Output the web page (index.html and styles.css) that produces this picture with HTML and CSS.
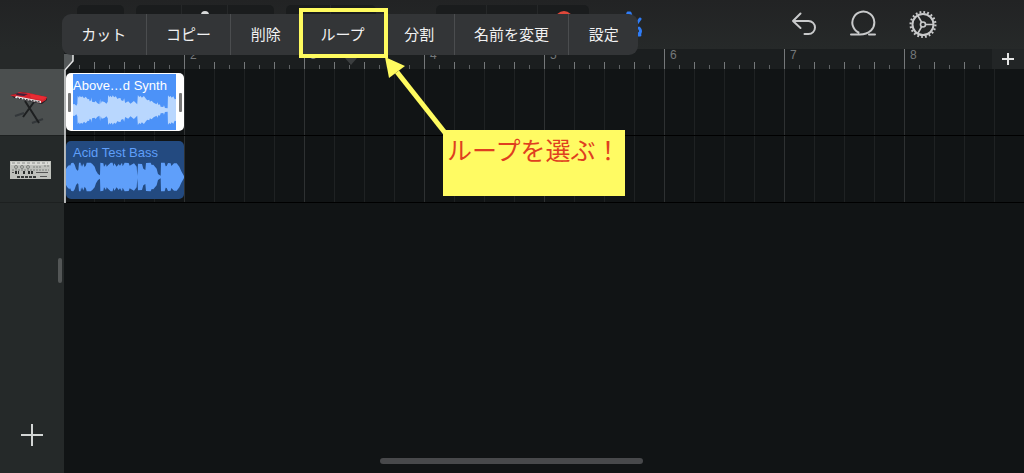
FILE: index.html
```html
<!DOCTYPE html>
<html lang="ja">
<head>
<meta charset="utf-8">
<title>トラック</title>
<meta name="viewport" content="width=device-width, initial-scale=1">
<link rel="stylesheet" href="styles.css">
</head>
<body>
<div class="app">
  <header class="toolbar">
    <div class="group"><button class="tool" aria-label="ブラウザ"></button></div>
    <div class="group">
      <button class="tool" aria-label="表示"></button>
      <button class="tool" aria-label="音源"><span class="dot dot-white"></span></button>
      <button class="tool" aria-label="トラック"></button>
    </div>
    <div class="group group-mid"><button class="tool" aria-label="エフェクト"></button><button class="tool" aria-label="コントロール"></button></div>
    <div class="group group-transport">
      <button class="tool" aria-label="先頭へ"></button>
      <button class="tool" aria-label="再生"></button>
      <button class="tool" aria-label="録音"><span class="dot dot-red"></span></button>
    </div>
    <button class="icon metronome" aria-label="メトロノーム">
      <svg width="24" height="30" viewBox="0 0 24 30" fill="none" stroke="#2f7cf6" stroke-width="3" stroke-linecap="round" stroke-linejoin="round"><path d="M7 4h2l7 20c0 2 2 2 3 0 1-2 0-4-1-5M7 4 1 26h18M12 20 19 10"/></svg>
    </button>
    <nav class="actions">
      <button class="icon" aria-label="取り消す">
        <svg width="26" height="28" viewBox="0 0 26 28" fill="none" stroke="#c9cacb" stroke-width="2" stroke-linecap="round" stroke-linejoin="round"><path d="M9.500 3.500 2 11l7.500 7M2 11h15.500a6.500 6.500 0 0 1 6.500 6.500 6.500 6.500 0 0 1-6.500 6.500h-4"/></svg>
      </button>
      <button class="icon" aria-label="ループブラウザ">
        <svg width="28" height="28" viewBox="0 0 28 28" fill="none" stroke="#c9cacb" stroke-width="2" stroke-linecap="round"><path d="M2 24.500H11Q17.500 24.500 22 20.500A11 11 0 1 0 9.500 22.500M20 24.500H26"/></svg>
      </button>
      <button class="icon" aria-label="設定">
        <svg width="28" height="28" viewBox="0 0 28 28" fill="none" stroke="#c9cacb"><circle cx="14" cy="14.500" r="10.500" stroke-width="2"/><circle cx="14" cy="14.500" r="12.400" stroke-width="2.200" stroke-dasharray="1.800 2.095"/><circle cx="14" cy="14.500" r="2.500" stroke-width="1.600"/><path stroke-width="1.700" d="M16.500 14.500H25M12.700 12.300 8.700 5.300M12.700 16.700l-4 7"/></svg>
      </button>
    </nav>
  </header>

  <div class="corner"></div>
  <div class="rulerbar">
    <ol class="ruler">
      <li></li><li>2</li><li>3</li><li>4</li><li>5</li><li>6</li><li>7</li><li>8</li>
    </ol>
    <button class="section-add" aria-label="セクションを追加">
      <svg width="12" height="12" viewBox="0 0 12 12" stroke="#e4e5e5" stroke-width="2"><path d="M6 0v12M0 6h12"/></svg>
    </button>
    <svg class="endmark" width="12" height="7" viewBox="0 0 12 7"><path d="M0 0h12L6 7z" fill="#3b3e3f"/></svg>
  </div>

  <aside class="sidebar">
    <button class="track-head selected" aria-label="Above and Beyond Synth">
      <svg width="46" height="46" viewBox="0 0 46 46"><path d="M7 36l9-3M24 43l11-4" stroke="#33373a" stroke-width="2"/><path d="M17 21 31 43M26 22 15 37" fill="none" stroke="#1d1f20" stroke-width="2"/><path d="M3 15l11-3 25 5v3l-5 4L6 18z" fill="#242026"/><path d="M2 15l6-1 3-2 10 1 18 4-1 3-5 3L4 16z" fill="#d3252f"/><path d="M9 13l11 1-4 2-8-1z" fill="#42203a"/><path d="M8 16l25 5v2L7 18z" fill="#eceaea"/><path d="M9 18l23 4" stroke="#27282b" stroke-dasharray="2 1"/><path d="M22 14l17 3-4 3-12-2z" fill="#ea2b33"/></svg>
    </button>
    <button class="track-head" aria-label="Acid Test Bass">
      <svg width="42" height="20" viewBox="0 0 42 20"><path fill="#bfc1bc" d="M0 1h41v18H0z"/><path fill="#dadbd6" d="M1 2h39v3H1z"/><path stroke="#8b8e8b" d="M2 3h36" stroke-dasharray="3 2"/><g fill="none" stroke="#7d807c"><circle cx="6" cy="7" r="1.500"/><circle cx="12" cy="7" r="1.500"/><circle cx="18" cy="7" r="1.500"/><path d="M23 7h9M34 6h5M2 10h37" stroke-dasharray="2 1"/></g><path stroke="#292c2b" stroke-width="3" d="M5 12.500h4M13 12.500h3M18 12.500h5" stroke-dasharray="2 1"/><path stroke="#555" d="M26 12.500h12M2 12.500h2M30 16.500h7"/><path stroke="#363938" stroke-width="2" d="M7 17h20" stroke-dasharray="3 1"/></svg>
    </button>
    <span class="grip"></span>
    <button class="track-add" aria-label="トラックを追加">
      <svg width="24" height="24" viewBox="0 0 24 24" stroke="#d3d6d5" stroke-width="2"><path d="M12 1v22M1 12h22"/></svg>
    </button>
  </aside>

  <main class="timeline">
    <div class="lane">
      <button class="clip clip-active">
        <span class="clip-body">
          <span class="clip-name">Above…d Synth</span>
          <svg class="wave" viewBox="40 89 308 96" preserveAspectRatio="none" fill="#b9d7fe">
            <path id="w1" d="M40 137V120L44 119 50 124 53 118 54 95 58 100 60 94 64 99 68 96 73 102 78 97 84 105 88 104 90 111 94 108 95 99 97 112 104 114 108 110 112 116 119 120 121 104 123 118 126 111 134 113 140 118 144 112 145 92 149 99 151 94 156 99 159 93 163 99 168 96 173 104 176 102 182 101 184 108 190 110 193 102 196 116 205 111 212 118 222 110 232 120 234 92 238 98 242 95 246 100 252 95 258 103 262 108 268 106 270 112 275 109 281 115 290 120 292 114 296 122 300 120 302 127 310 128 312 123 315 131 323 132 324 93 328 98 332 95 335 100 340 96 344 105 348 104V137Z"/>
            <use href="#w1" transform="matrix(1 0 0 -1 0 274)"/>
          </svg>
        </span>
      </button>
    </div>
    <div class="lane">
      <button class="clip clip-idle">
        <span class="clip-body">
          <span class="clip-name">Acid Test Bass</span>
          <svg class="wave" viewBox="18 81 354 96" preserveAspectRatio="none" fill="#5f9ffa">
            <path id="w2" d="M18 129V105L22 98 28 92 30 96 34 87 40 86 44 92 48 104 52 110 55 108 57 86 62 86 63 98 66 90 68 98 70 88 74 100 78 94 80 86 92 86 97 90 104 98 108 110 114 120 120 124 121 86 130 88 132 98 138 90 140 98 144 94 152 86 158 86 160 97 163 88 170 98 176 90 180 95 186 86 188 97 194 86 206 87 209 95 214 92 222 88 230 98 232 125 234 89 246 90 250 104 256 108 258 87 272 86 275 93 280 92 290 104 294 120 302 125 303 86 314 86 317 97 320 96 324 87 332 88 334 96 342 88 350 88 358 98 364 112 372 126V129Z"/>
            <use href="#w2" transform="matrix(1 0 0 -1 0 258)"/>
          </svg>
        </span>
      </button>
    </div>
    <svg class="playhead" width="12" height="149" viewBox="0 0 12 149"><path d="M0 0h9v7L1 15H0z" fill="#55595a"/><path d="M9 0v7L1 16v133" fill="none" stroke="#e6e7e7" stroke-width="1.500"/></svg>
  </main>

  <div class="menu" role="menu">
    <button role="menuitem">カット</button>
    <button role="menuitem">コピー</button>
    <button role="menuitem">削除</button>
    <button role="menuitem">ループ</button>
    <button role="menuitem">分割</button>
    <button role="menuitem">名前を変更</button>
    <button role="menuitem">設定</button>
  </div>

  <div class="frame"></div>
  <svg class="arrow" width="64" height="80" viewBox="0 0 64 80"><path d="M12 16 61 78" stroke="#fffb5f" stroke-width="5"/><path d="M0 1 20 10 4 22z" fill="#fffb5f"/></svg>
  <p class="note">ループを選ぶ！</p>
  <span class="home"></span>
</div>
</body>
</html>
```
FILE: styles.css
```css
* { box-sizing: border-box; }
body {
  margin: 0;
  background: #111415;
  font-family: "Liberation Sans", "Noto Sans CJK JP", sans-serif;
}
button {
  margin: 0;
  padding: 0;
  border: 0;
  background: none;
  color: inherit;
  font: inherit;
}
svg { display: block; }

.app {
  position: relative;
  display: grid;
  grid-template-columns: 64px minmax(0, 1fr);
  grid-template-rows: 49px 20px 1fr;
  min-height: 100vh;
  overflow: hidden;
}

.toolbar {
  grid-column: 1 / -1;
  display: flex;
  align-items: flex-start;
  gap: 12px;
  padding: 5px 87px 0 77px;
  background: linear-gradient(#222324, #262929);
}
.group {
  display: flex;
  height: 38px;
  border-radius: 5px;
  background: #1a1c1d;
}
.tool {
  display: flex;
  justify-content: center;
  width: 47px;
  padding-top: 6px;
  border-right: 1px solid #252728;
}
.group .tool:last-child { border-right: 0; }
.group:nth-child(2) .tool { width: 46px; }
.group-mid .tool { width: 45px; }
.group-transport { margin-left: 48px; }
.group-transport .tool { width: 51px; }
.dot { border-radius: 50%; }
.dot-white { width: 8px; height: 8px; background: #d8d9da; }
.dot-red { width: 18px; height: 18px; background: #e0483a; }
.metronome { margin: 4px 0 0 20px; }
.actions {
  display: flex;
  gap: 32px;
  margin: 5px 0 0 auto;
}

.corner { background: #262929; }
.rulerbar {
  position: relative;
  display: flex;
  background: #1b1e1f;
}
.ruler {
  flex: 1;
  min-width: 0;
  display: flex;
  margin: 0;
  padding: 0;
  list-style: none;
  overflow: hidden;
  color: #75787a;
  font-size: 12px;
  line-height: 13px;
  background:
    repeating-linear-gradient(90deg, #75787a 0 1px, transparent 1px 30px) 0 100% / 100% 7px no-repeat,
    repeating-linear-gradient(90deg, #606365 0 1px, transparent 1px 15px) 0 100% / 100% 4px no-repeat;
}
.ruler li {
  flex: 0 0 120px;
  padding-left: 5px;
  border-left: 1px solid #75787a;
}
.ruler li:first-child { border-color: transparent; }
.section-add {
  display: grid;
  place-items: center;
  width: 32px;
  background: #222526;
}
.endmark { position: absolute; left: 281px; top: 9px; }

.sidebar {
  display: flex;
  flex-direction: column;
  background: #252929;
}
.track-head {
  display: grid;
  place-items: center;
  height: 67px;
  padding: 2px 3px 0 0;
  border-bottom: 1px solid #1d2020;
}
.selected { background: #4b4f4f; }
.grip {
  align-self: flex-end;
  width: 4px;
  height: 25px;
  margin: 55px 2px 0 0;
  border-radius: 2px;
  background: #535656;
}
.track-add {
  align-self: center;
  margin: auto 0 26px;
}

.timeline { position: relative; }
.lane {
  height: 67px;
  padding: 4px 2px;
  border-bottom: 1px solid #000;
  background:
    repeating-linear-gradient(90deg, #2e3132 0 1px, transparent 1px 120px),
    repeating-linear-gradient(90deg, #1f2223 0 1px, transparent 1px 30px);
}
.lane + .lane { padding-top: 5px; }
.clip {
  display: block;
  width: 118px;
  height: 58px;
  border-radius: 5px;
  overflow: hidden;
  text-align: left;
}
.clip-active {
  position: relative;
  padding: 1px 8px 1px 7px;
  background: #fff;
}
.clip-active::before,
.clip-active::after {
  content: "";
  position: absolute;
  top: 20px;
  width: 3px;
  height: 19px;
  border-radius: 1px;
  background: #777;
}
.clip-active::before { left: 2px; }
.clip-active::after { right: 2px; }
.clip-body {
  display: flex;
  flex-direction: column;
  height: 100%;
}
.clip-active .clip-body { background: #4c92f8; color: #fff; }
.clip-idle { background: #234a80; color: #5f9ffa; }
.clip-idle .clip-name { padding-left: 7px; }
.clip-name {
  padding-top: 3px;
  font-size: 13px;
  line-height: 17px;
  white-space: nowrap;
}
.wave { width: 100%; height: 32px; }
.playhead { position: absolute; left: 0; top: -15px; }

.menu {
  position: absolute;
  left: 62px;
  top: 14px;
  display: flex;
  width: 576px;
  height: 41px;
  border-radius: 9px;
  overflow: hidden;
  background: #333537;
  color: #f1f1f2;
  font-size: 15px;
  font-family: "Noto Sans CJK JP", sans-serif;
}
.menu button {
  flex: 1 0 auto;
  padding: 0 19px 2px;
  border-right: 1px solid #4b4d4f;
}
.menu button:last-child { border-right: 0; }

.frame {
  position: absolute;
  left: 299px;
  top: 8px;
  width: 89px;
  height: 50px;
  border: 4px solid #fffb5f;
}
.arrow { position: absolute; left: 385px; top: 56px; }
.note {
  position: absolute;
  left: 443px;
  top: 130px;
  width: 182px;
  height: 66px;
  margin: 0;
  padding: 1px 4px;
  background: #fffb63;
  color: #df3f20;
  font-family: "Noto Sans CJK JP", sans-serif;
  font-size: 25px;
  line-height: 36px;
  white-space: nowrap;
}
.home {
  position: absolute;
  left: 50%;
  bottom: 9px;
  width: 263px;
  height: 6px;
  margin-left: -132px;
  border-radius: 3px;
  background: #48494b;
}
```
